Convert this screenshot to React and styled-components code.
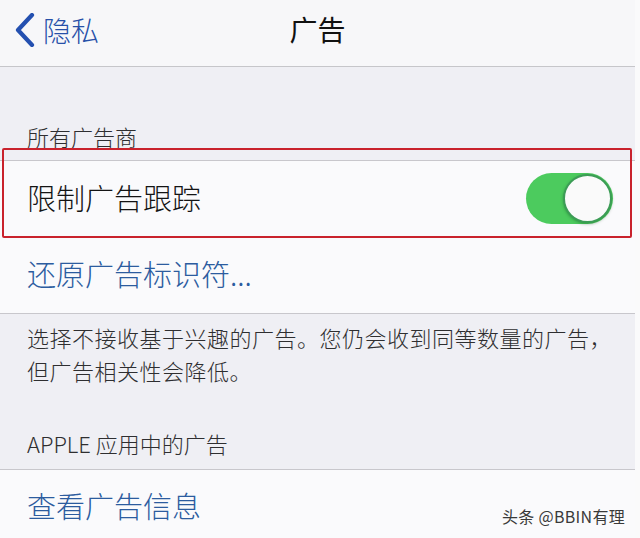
import React from 'react'
import styled, { createGlobalStyle } from 'styled-components'

const GlobalStyle = createGlobalStyle`
  html, body {
    margin: 0;
    padding: 0;
    background: #fafafb;
  }
  body {
    font-family: "Noto Sans CJK SC", "Noto Sans", sans-serif;
    -webkit-font-smoothing: antialiased;
  }
`

const Screen = styled.div`
  position: relative;
  width: 635px;
  height: 538px;
  overflow: hidden;
  background: #efeff4;
  display: flex;
  flex-direction: column;
`

const NavBar = styled.div`
  height: 66px;
  flex-shrink: 0;
  display: grid;
  grid-template-columns: 1fr auto 1fr;
  align-items: center;
  background: #f7f7f9;
  border-bottom: 1px solid #c6c6ca;
`

const BackButton = styled.div`
  display: flex;
  align-items: center;
  gap: 8px;
  padding-left: 15px;
  color: #2750a8;
  font-size: 28px;
  font-weight: 300;
  line-height: 1;
  margin-top: -6px;
`

const Title = styled.div`
  font-size: 28px;
  color: #111;
  line-height: 1;
  margin-top: -8px;
`

const SectionHeader = styled.div`
  height: ${p => p.$height}px;
  flex-shrink: 0;
  display: flex;
  align-items: flex-end;
  padding: 0 0 ${p => p.$pad}px 27px;
  box-sizing: border-box;
  font-size: 22px;
  font-weight: 300;
  line-height: 30px;
  color: #2e2e30;
`

const Group = styled.div`
  background: #fafafc;
  border-top: 1px solid #c8c7cc;
  border-bottom: 1px solid #c8c7cc;
`

// red marker drawn over the first cell
const Highlight = styled.div`
  position: relative;
  &::after {
    content: '';
    position: absolute;
    left: 2px;
    right: 3px;
    top: -13px;
    bottom: 0;
    border: 2px solid #c9222c;
    border-radius: 2px;
    pointer-events: none;
  }
`

const Row = styled.div`
  height: ${p => p.$height}px;
  display: flex;
  align-items: center;
  justify-content: space-between;
  padding: 0 22px 0 27px;
  box-sizing: border-box;
`

const Label = styled.span`
  font-size: 29px;
  font-weight: 300;
  line-height: 1;
  margin-top: -4px;
  color: ${p => (p.$link ? '#2c5c9f' : '#141414')};
`

const Toggle = styled.div`
  position: relative;
  width: 87px;
  height: 51px;
  border-radius: 26px;
  background: #4ccb5e;
  margin-top: -2px;
`

const Thumb = styled.div`
  position: absolute;
  right: 1px;
  top: 1px;
  width: 45px;
  height: 45px;
  border-radius: 50%;
  background: #fafafa;
  border: 2px solid #3c9c56;
  box-shadow: 0 1px 3px rgba(0, 60, 20, 0.35);
`

const Footer = styled.div`
  padding: 7px 20px 0 27px;
  font-size: 22px;
  font-weight: 300;
  line-height: 33px;
  letter-spacing: 0.5px;
  color: #2e2e30;
`

const Watermark = styled.div`
  position: absolute;
  right: 10px;
  bottom: 14px;
  font-size: 16px;
  line-height: 1;
  color: #3a3a3a;
  letter-spacing: 0.3px;
`

const Chevron = () => (
  <svg width="20" height="34" viewBox="0 0 20 34">
    <path d="M17 2 L3 17 L17 32" fill="none" stroke="#2450b0" strokeWidth="4.2" strokeLinecap="round" strokeLinejoin="round" />
  </svg>
)

export default function App() {
  return (
    <>
      <GlobalStyle />
      <Screen>
        <NavBar>
          <BackButton>
            <Chevron />
            隐私
          </BackButton>
          <Title>广告</Title>
          <div />
        </NavBar>
        <SectionHeader $height={93} $pad={9}>所有广告商</SectionHeader>
        <Group>
          <Highlight>
            <Row $height={77}>
              <Label>限制广告跟踪</Label>
              <Toggle>
                <Thumb />
              </Toggle>
            </Row>
          </Highlight>
          <Row $height={75}>
            <Label $link>还原广告标识符...</Label>
          </Row>
        </Group>
        <Footer>
          选择不接收基于兴趣的广告。您仍会收到同等数量的广告，
          <br />
          但广告相关性会降低。
        </Footer>
        <SectionHeader $height={82} $pad={11}>APPLE 应用中的广告</SectionHeader>
        <Group>
          <Row $height={75}>
            <Label $link>查看广告信息</Label>
          </Row>
        </Group>
        <Watermark>头条 @BBIN有理</Watermark>
      </Screen>
    </>
  )
}
